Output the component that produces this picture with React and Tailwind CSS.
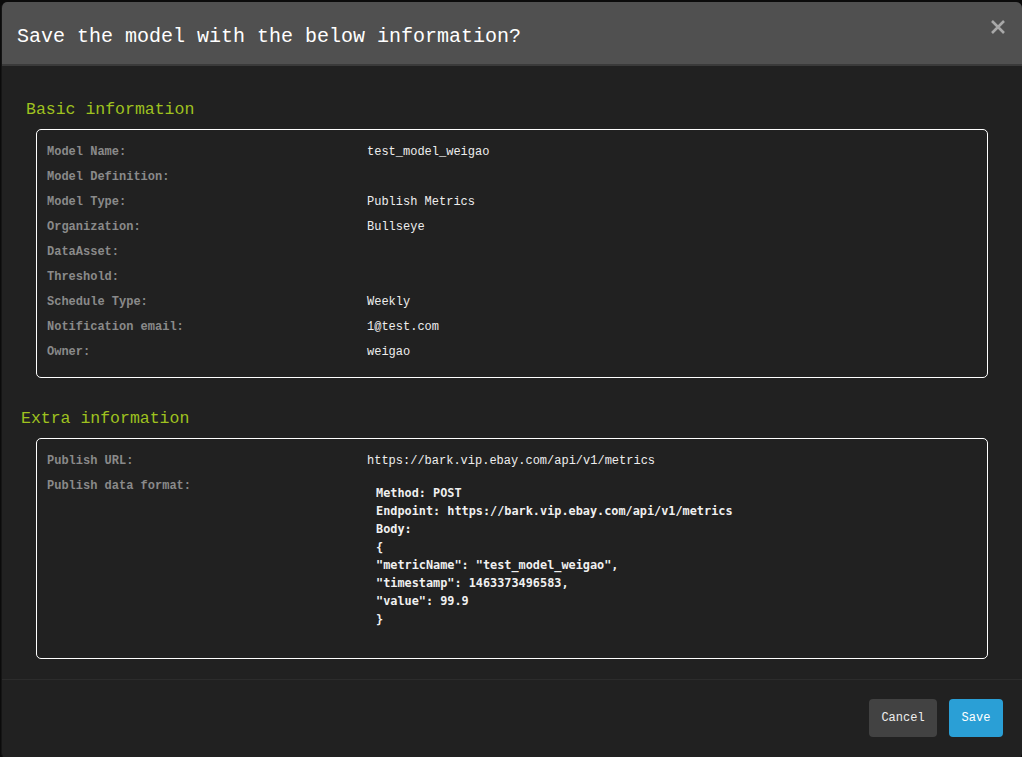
const basicRows = [
  ["Model Name:", "test_model_weigao"],
  ["Model Definition:", ""],
  ["Model Type:", "Publish Metrics"],
  ["Organization:", "Bullseye"],
  ["DataAsset:", ""],
  ["Threshold:", ""],
  ["Schedule Type:", "Weekly"],
  ["Notification email:", "1@test.com"],
  ["Owner:", "weigao"],
];

const codeLines = [
  "Method: POST",
  "Endpoint: https://bark.vip.ebay.com/api/v1/metrics",
  "Body:",
  "{",
  '"metricName": "test_model_weigao",',
  '"timestamp": 1463373496583,',
  '"value": 99.9',
  "}",
];

const mono = "font-['Liberation_Mono',monospace]";

function Row({ label, children }) {
  return (
    <div className="flex">
      <div className="w-[320px] shrink-0 h-[25px] leading-[25px] font-bold text-[12px] text-[#8a8a8a]">
        {label}
      </div>
      <div className="flex-1 text-[12px] text-[#eeeeee] leading-[25px]">
        {children}
      </div>
    </div>
  );
}

export default function App() {
  return (
    <div className={`h-[757px] w-[1022px] overflow-hidden bg-[#0b0b0b] pt-[2px] pl-[1px] ${mono}`}>
      <div className="h-[757px] rounded-md bg-[#212121] overflow-hidden border-l border-[#151515]">
        <div className="h-[64px] bg-[#505050] border-b-2 border-[#3a3a3a] flex items-center justify-between pl-[15px] pr-[16px]">
          <h4 className="text-[20px] text-white leading-none pt-[8px]">
            Save the model with the below information?
          </h4>
          <button className="text-[#a8a8a8] -mt-[12px]">
            <svg width="16" height="16" viewBox="0 0 16 16">
              <path d="M2 2L14 14M14 2L2 14" stroke="currentColor" strokeWidth="2.6" />
            </svg>
          </button>
        </div>

        <div className="pt-[34px] pr-[34px]">
          <h3 className="pl-[24px] text-[16.5px] leading-[20px] text-[#9fc21f]">
            Basic information
          </h3>
          <div className="ml-[34px] mt-[9px] border border-white rounded-[5px] pl-[10px] pt-[10px] pb-[12px]">
            {basicRows.map(([label, value]) => (
              <Row key={label} label={label}>
                {value}
              </Row>
            ))}
          </div>

          <h3 className="pl-[19px] mt-[31px] text-[16.5px] leading-[20px] text-[#9fc21f]">
            Extra information
          </h3>
          <div className="ml-[34px] mt-[9px] border border-white rounded-[5px] pl-[10px] pt-[10px] pb-[30px]">
            <Row label="Publish URL:">https://bark.vip.ebay.com/api/v1/metrics</Row>
            <div className="flex">
              <div className="w-[320px] shrink-0 h-[25px] leading-[25px] font-bold text-[12px] text-[#8a8a8a]">
                Publish data format:
              </div>
              <pre className="flex-1 pl-[9px] pt-[10px] font-['DejaVu_Sans_Mono',monospace] font-bold text-[11.85px] leading-[18px] text-[#f0f0f0]">
                {codeLines.join("\n")}
              </pre>
            </div>
          </div>
        </div>

        <div className="mt-[20px] border-t border-[#2c2c2c] flex justify-end gap-[12px] pt-[19px] pr-[19px]">
          <button className="h-[38px] w-[68px] rounded-[4px] bg-[#424242] text-[12px] text-[#eeeeee]">
            Cancel
          </button>
          <button className="h-[38px] w-[54px] rounded-[4px] bg-[#2a9fd6] text-[12px] text-white">
            Save
          </button>
        </div>
      </div>
    </div>
  );
}
